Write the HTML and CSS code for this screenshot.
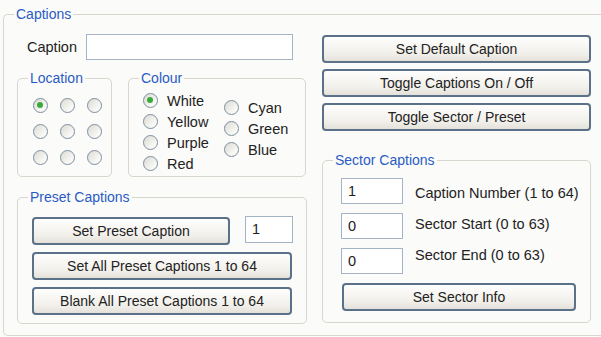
FILE: index.html
```html
<!DOCTYPE html>
<html lang="en">
<head>
    <meta charset="UTF-8">
    <title>Captions</title>
    <link rel="stylesheet" href="styles.css">
</head>
<body>
    <div class="group outer">
        <span class="group-title">Captions</span>

        <div class="col-left">
            <div class="caption-row">
                <label for="caption">Caption</label>
                <input type="text" id="caption" class="text">
            </div>

            <div class="group-row">
                <!-- Location -->
                <div class="group location">
                    <span class="group-title">Location</span>
                    <div class="loc-grid">
                        <input type="radio" name="loc" checked>
                        <input type="radio" name="loc">
                        <input type="radio" name="loc">
                        <input type="radio" name="loc">
                        <input type="radio" name="loc">
                        <input type="radio" name="loc">
                        <input type="radio" name="loc">
                        <input type="radio" name="loc">
                        <input type="radio" name="loc">
                    </div>
                </div>

                <!-- Colour -->
                <div class="group colour">
                    <span class="group-title">Colour</span>
                    <div class="colour-col">
                        <label class="opt"><input type="radio" name="col" checked> White</label>
                        <label class="opt"><input type="radio" name="col"> Yellow</label>
                        <label class="opt"><input type="radio" name="col"> Purple</label>
                        <label class="opt"><input type="radio" name="col"> Red</label>
                    </div>
                    <div class="colour-col second">
                        <label class="opt"><input type="radio" name="col"> Cyan</label>
                        <label class="opt"><input type="radio" name="col"> Green</label>
                        <label class="opt"><input type="radio" name="col"> Blue</label>
                    </div>
                </div>
            </div>

            <!-- Preset Captions -->
            <div class="group preset">
                <span class="group-title">Preset Captions</span>
                <div class="preset-row">
                    <button class="btn btn-preset">Set Preset Caption</button>
                    <input type="text" class="text num-preset" value="1">
                </div>
                <button class="btn btn-wide">Set All Preset Captions 1 to 64</button>
                <button class="btn btn-wide">Blank All Preset Captions 1 to 64</button>
            </div>
        </div>

        <div class="col-right">
            <button class="btn btn-side">Set Default Caption</button>
            <button class="btn btn-side">Toggle Captions On / Off</button>
            <button class="btn btn-side">Toggle Sector / Preset</button>

            <!-- Sector Captions -->
            <div class="group sector">
                <span class="group-title">Sector Captions</span>
                <div class="sector-body">
                    <div class="sector-inputs">
                        <input type="text" class="text num" value="1">
                        <input type="text" class="text num" value="0">
                        <input type="text" class="text num" value="0">
                    </div>
                    <div class="sector-labels">
                        <span>Caption Number (1 to 64)</span>
                        <span>Sector Start (0 to 63)</span>
                        <span>Sector End (0 to 63)</span>
                    </div>
                </div>
                <button class="btn btn-sector">Set Sector Info</button>
            </div>
        </div>
    </div>
</body>
</html>
```

FILE: styles.css
```css
html, body {
    overflow: hidden;
}
body {
    margin: 0;
    background: #fbfbf9;
    font-family: "Liberation Sans", Arial, sans-serif;
    font-size: 14.5px;
    color: #222;
}
.group {
    position: relative;
    border: 1px solid #d9d6ce;
    border-radius: 5px;
    box-sizing: border-box;
}
.group-title {
    position: absolute;
    top: -9px;
    left: 10px;
    padding: 0 2px;
    background: #fbfbf9;
    color: #2a5bc4;
    font-size: 14px;
    line-height: 16px;
}
/* the outer box runs off the right edge, so no right border */
.outer {
    display: flex;
    margin: 14px 0 0 3px;
    width: 598px;
    height: 322px;
    padding: 19px 0 0 13px;
    gap: 15px;
    border-right: none;
    border-radius: 5px 0 0 5px;
}
.col-left {
    width: 290px;
    display: flex;
    flex-direction: column;
}
.col-right {
    width: 269px;
    margin-top: 1px;
    display: flex;
    flex-direction: column;
    gap: 6px;
}
.caption-row {
    display: flex;
    align-items: center;
    margin-left: 10px;
}
.caption-row label {
    width: 59px;
}
.text {
    box-sizing: border-box;
    height: 26px;
    border: 1px solid #a3b4c6;
    background: #fff;
    font: inherit;
    color: #222;
    padding: 0 6px;
    margin: 0;
}
#caption {
    width: 207px;
}
.group-row {
    display: flex;
    gap: 16px;
    margin-top: 18px;
}
.location {
    width: 95px;
    height: 99px;
    padding: 19px 0 0 15px;
}
.loc-grid {
    display: grid;
    grid-template-columns: repeat(3, 15px);
    column-gap: 12px;
    row-gap: 11px;
}
input[type="radio"] {
    appearance: none;
    -webkit-appearance: none;
    flex: none;
    width: 15px;
    height: 15px;
    margin: 0;
    border: 1.5px solid #7d8ea0;
    border-radius: 50%;
    background: linear-gradient(135deg, #dcdad2, #f7f7f4 70%, #fff);
    box-sizing: border-box;
    position: relative;
}
input[type="radio"]:checked::after {
    content: "";
    position: absolute;
    left: 3px;
    top: 3px;
    width: 6px;
    height: 6px;
    border-radius: 50%;
    background: #3aab3a;
}
.colour {
    width: 178px;
    height: 99px;
    display: flex;
    padding: 11px 0 0 14px;
}
.colour-col {
    display: flex;
    flex-direction: column;
    width: 84px;
}
.colour-col.second {
    margin-top: 7px;
}
.opt {
    display: flex;
    align-items: center;
    height: 21px;
    gap: 9px;
}
.preset {
    margin-top: 20px;
    height: 127px;
    padding: 17px 0 0 14px;
    display: flex;
    flex-direction: column;
    gap: 7px;
}
.preset-row {
    display: flex;
    align-items: center;
    gap: 15px;
}
.num-preset {
    width: 48px;
    height: 27px;
    margin-top: -2px;
}
.btn {
    box-sizing: border-box;
    height: 28px;
    border: 2px solid #5a7189;
    border-radius: 4px;
    background: linear-gradient(#fefefd, #f1efea 70%, #e4e1d9);
    font: inherit;
    font-size: 14px;
    color: #222;
    padding: 0;
    margin: 0;
}
.btn-preset {
    width: 198px;
    margin-top: 2px;
}
.btn-wide {
    width: 260px;
}
.btn-side {
    width: 269px;
}
.sector {
    margin-top: 23px;
    height: 163px;
    padding: 17px 0 0 18px;
}
.sector-body {
    display: flex;
    gap: 12px;
}
.sector-inputs {
    display: flex;
    flex-direction: column;
    gap: 9px;
}
.num {
    width: 62px;
}
.sector-labels {
    display: flex;
    flex-direction: column;
    line-height: 31px;
}
.btn-sector {
    width: 234px;
    margin: 9px 0 0 1px;
}
```
